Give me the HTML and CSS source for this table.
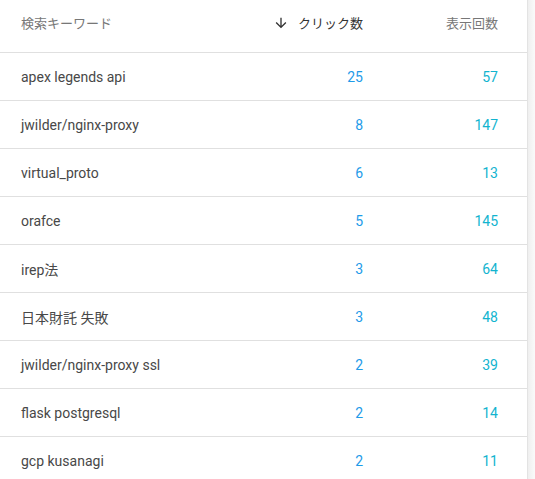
FILE: index.html
```html
<!DOCTYPE html>
<html lang="ja">
<head>
<meta charset="utf-8">
<link rel="stylesheet" href="styles.css">
</head>
<body>
<div class="page">
  <div class="table">
    <div class="row head">
      <div class="cell kw">検索キーワード</div>
      <div class="cell num sorted"><svg class="arrow" viewBox="0 0 24 24" width="16" height="16"><path d="M20 12l-1.41-1.41L13 16.17V4h-2v12.17l-5.58-5.59L4 12l8 8 8-8z" fill="currentColor"/></svg>クリック数</div>
      <div class="cell num">表示回数</div>
    </div>
    <div class="row"><div class="cell kw">apex legends api</div><div class="cell num clicks">25</div><div class="cell num imps">57</div></div>
    <div class="row"><div class="cell kw">jwilder/nginx-proxy</div><div class="cell num clicks">8</div><div class="cell num imps">147</div></div>
    <div class="row"><div class="cell kw">virtual_proto</div><div class="cell num clicks">6</div><div class="cell num imps">13</div></div>
    <div class="row"><div class="cell kw">orafce</div><div class="cell num clicks">5</div><div class="cell num imps">145</div></div>
    <div class="row"><div class="cell kw">irep法</div><div class="cell num clicks">3</div><div class="cell num imps">64</div></div>
    <div class="row"><div class="cell kw">日本財託 失敗</div><div class="cell num clicks">3</div><div class="cell num imps">48</div></div>
    <div class="row"><div class="cell kw">jwilder/nginx-proxy ssl</div><div class="cell num clicks">2</div><div class="cell num imps">39</div></div>
    <div class="row"><div class="cell kw">flask postgresql</div><div class="cell num clicks">2</div><div class="cell num imps">14</div></div>
    <div class="row"><div class="cell kw">gcp kusanagi</div><div class="cell num clicks">2</div><div class="cell num imps">11</div></div>
  </div>
  <div class="edge"></div>
</div>
</body>
</html>
```

FILE: styles.css
```css
html, body {
  margin: 0;
  padding: 0;
  background: #ffffff;
}
body {
  font-family: Roboto, "Noto Sans CJK JP", sans-serif;
  color: #484848;
}
.page {
  display: flex;
  width: 535px;
  height: 479px;
  overflow: hidden;
}
.table {
  width: 527px;
  flex: none;
}
.edge {
  flex: 1;
  border-left: 1px solid #e3e3e3;
  background: linear-gradient(to right, #efefef, #fafafa);
}
.row {
  display: grid;
  grid-template-columns: 1fr 120px 135px;
  height: 47px;
  border-bottom: 1px solid #e0e0e0;
  align-items: center;
  padding: 0 29px 0 21px;
  font-size: 14px;
}
.row.head {
  align-items: start;
  padding-top: 13px;
  box-sizing: content-box;
  height: 39px;
  font-size: 13px;
  color: #777777;
}
.num {
  text-align: right;
}
.sorted {
  color: #333333;
  display: flex;
  justify-content: flex-end;
  align-items: center;
}
.arrow {
  margin-right: 9px;
}
.clicks {
  color: #1e9be9;
}
.imps {
  color: #12b4cf;
}
```
